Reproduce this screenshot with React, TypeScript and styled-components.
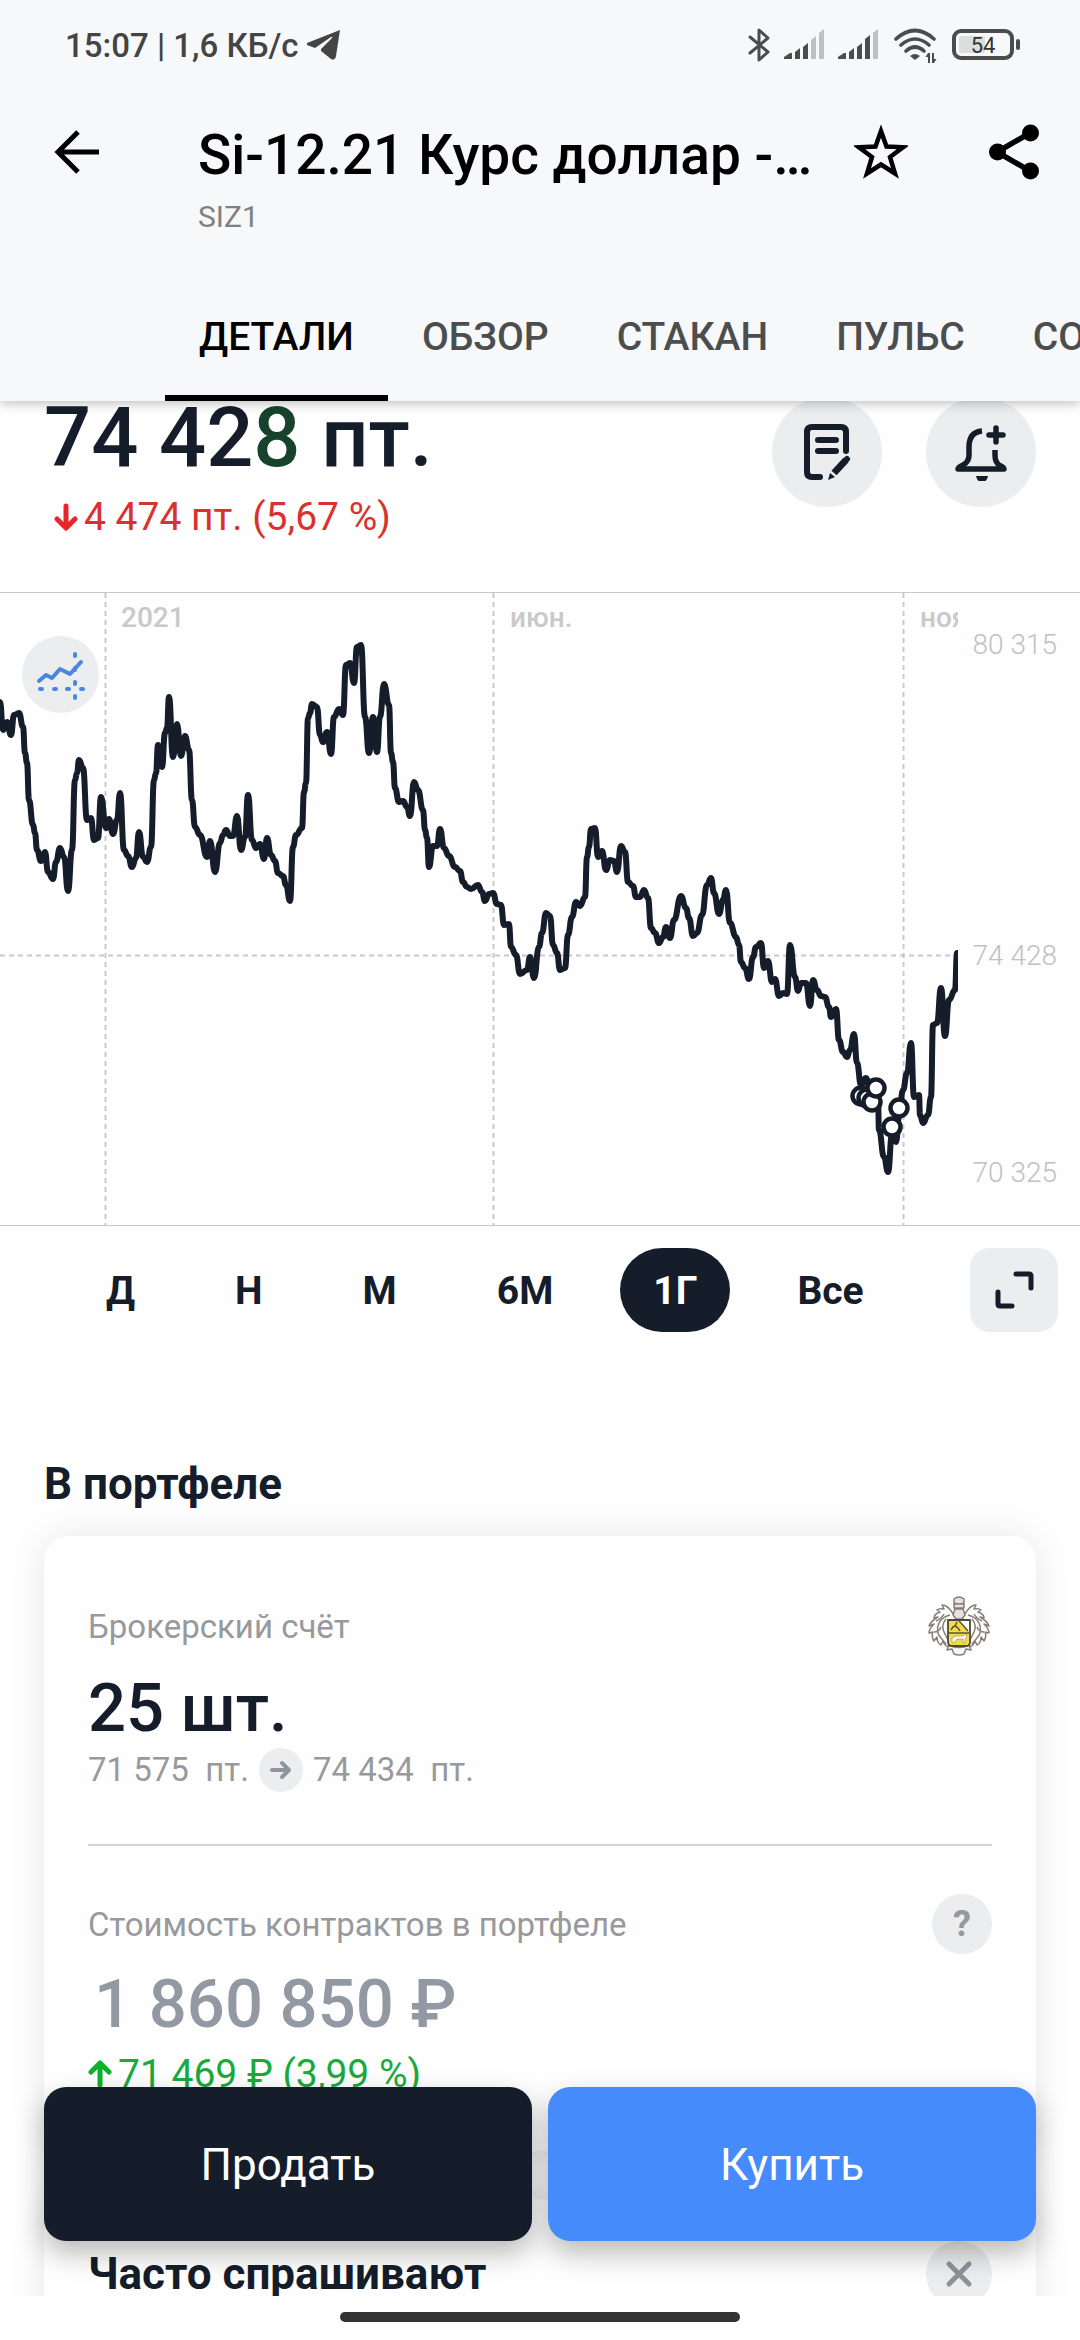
import styled, { createGlobalStyle, css } from "styled-components";
import { useState } from "react";

type Point = [number, number];

const tabs = ["ДЕТАЛИ", "ОБЗОР", "СТАКАН", "ПУЛЬС", "СОБЫТИЯ"];
const ranges = ["Д", "Н", "М", "6М", "1Г", "Все"];

const prices: Point[] = [
  [0, 702], [3, 730], [7, 722], [11, 735], [14, 715], [19, 713], [23, 727], [25, 753],
  [27, 763], [29, 800], [33, 825], [35, 833], [37, 850], [41, 861], [45, 852], [48, 872],
  [53, 879], [56, 862], [60, 848], [64, 857], [68, 891], [72, 850], [75, 780], [77, 773],
  [79, 760], [83, 768], [87, 820], [91, 818], [94, 840], [98, 838], [101, 797], [106, 828],
  [109, 819], [113, 834], [117, 820], [120, 793], [124, 850], [128, 856], [132, 867], [136, 858],
  [139, 832], [143, 857], [147, 862], [151, 847], [154, 780], [156, 773], [158, 745], [162, 767],
  [165, 733], [167, 728], [169, 697], [173, 757], [177, 724], [181, 756], [185, 736], [189, 750],
  [192, 800], [195, 827], [200, 835], [207, 857], [210, 841], [215, 872], [220, 843], [223, 835],
  [226, 830], [230, 836], [233, 836], [237, 816], [241, 850], [245, 837], [248, 795], [252, 840],
  [256, 848], [260, 844], [264, 859], [267, 838], [271, 855], [275, 861], [278, 873], [283, 876],
  [286, 885], [290, 901], [293, 847], [296, 835], [302, 828], [304, 792], [306, 783], [308, 718],
  [310, 713], [312, 704], [317, 707], [320, 735], [323, 742], [327, 732], [331, 754], [334, 717],
  [339, 709], [343, 715], [346, 665], [350, 663], [354, 683], [357, 647], [361, 645], [365, 717],
  [369, 753], [373, 717], [377, 752], [380, 717], [384, 684], [389, 705], [391, 753], [393, 762],
  [395, 788], [399, 802], [403, 801], [407, 807], [410, 816], [414, 782], [418, 790], [423, 810],
  [425, 830], [427, 838], [429, 867], [433, 846], [437, 846], [440, 829], [444, 848], [449, 856],
  [455, 867], [460, 871], [463, 882], [467, 887], [471, 889], [478, 885], [482, 892], [485, 901],
  [489, 894], [493, 893], [497, 904], [501, 905], [504, 925], [509, 924], [511, 947], [516, 955],
  [520, 974], [527, 970], [530, 957], [534, 978], [539, 947], [542, 933], [546, 913], [550, 916],
  [553, 945], [557, 953], [560, 970], [565, 968], [568, 935], [572, 917], [576, 902], [580, 906],
  [585, 897], [587, 857], [589, 847], [591, 829], [595, 828], [598, 857], [602, 851], [606, 870],
  [610, 860], [614, 861], [617, 872], [621, 846], [625, 852], [628, 882], [633, 886], [636, 897],
  [640, 897], [644, 890], [648, 898], [651, 928], [655, 933], [659, 943], [663, 937], [666, 927],
  [670, 938], [674, 920], [681, 896], [686, 908], [689, 918], [693, 936], [697, 933], [702, 915],
  [707, 885], [711, 878], [714, 893], [719, 914], [723, 900], [726, 890], [730, 923], [736, 937],
  [739, 945], [741, 962], [745, 968], [749, 979], [753, 957], [756, 947], [761, 943], [764, 968],
  [768, 961], [772, 982], [775, 979], [779, 996], [783, 993], [787, 994], [790, 945], [795, 977],
  [798, 991], [801, 983], [806, 983], [810, 1006], [813, 980], [817, 990], [821, 996], [825, 997],
  [829, 1007], [831, 1017], [836, 1009], [839, 1040], [843, 1052], [847, 1057], [850, 1050], [854, 1034],
  [857, 1063], [861, 1085], [866, 1078], [872, 1102], [878, 1100], [879, 1130], [884, 1157], [888, 1172],
  [892, 1135], [896, 1142], [899, 1117], [903, 1090], [907, 1073], [911, 1043], [914, 1097], [919, 1095],
  [920, 1115], [923, 1123], [928, 1115], [931, 1097], [933, 1025], [937, 1023], [941, 988], [945, 1036],
  [949, 1000], [955, 990], [957, 953],
];

const deals: Point[] = [[861, 1096], [867, 1098], [872, 1102], [876, 1088], [899, 1108], [892, 1127]];

const buildLine = (points: Point[]) =>
  points
    .map(([x, y], i) => {
      if (i === 0) return `M${x} ${y}`;
      const [px, py] = points[i - 1];
      const mid = (px + x) / 2;
      return `C${mid} ${py} ${mid} ${y} ${x} ${y}`;
    })
    .join("");

const StatusIcons = () => (
  <svg width="272" height="36" viewBox="0 0 272 36" fill="none">
    <path d="M2 10l18 15-9 8V3l9 8L2 26" stroke="#4c4c4c" strokeWidth="3" strokeLinejoin="round" strokeLinecap="round" />
    <g fill="#4c4c4c">
      <path d="M36 32v-2l6-4h2v6zM47 25l5-4v11h-5zM55 20l5-4v16h-5z" />
      <path d="M63 13l5-4v23h-5zM71 6l5-4v30h-5z" opacity=".32" />
      <path d="M90 32v-2l6-4h2v6zM101 25l5-4v11h-5zM109 20l5-4v16h-5zM117 12l5-4v24h-5z" />
      <path d="M125 6l5-4v30h-5z" opacity=".32" />
      <path d="M167 33l-5-4q5-4 10 0z" />
      <path d="M180 36v-6h-2.500l2.500-4h2v10zM184 26v10h2l2.500-4H186v-6z" />
    </g>
    <path d="M148 12q19-17 38 0M153 18q14-12 28 0M158 24q9-8 18 0" stroke="#4c4c4c" strokeWidth="3.600" strokeLinecap="round" />
    <rect x="206" y="4" width="58" height="27" rx="7" stroke="#4c4c4c" strokeWidth="4" />
    <rect x="211" y="9" width="26" height="17" rx="2" fill="#dcdddf" />
    <rect x="268" y="12" width="4" height="11" rx="2" fill="#4c4c4c" />
    <text x="235" y="26" textAnchor="middle" fontSize="22" fill="#333">54</text>
  </svg>
);

const Crest = () => (
  <svg width="66" height="64" viewBox="0 0 66 64" fill="none" stroke="#857f78" strokeWidth="1.500" strokeLinejoin="round">
    <path d="M28 5q5-4 10 0v4q-5 2-10 0zM28 10h10v4H28zM29 15h8l2 6-3 4h-6l-3-4z" fill="#e6e3df" />
    <path d="M27 20q-5-9-11-9l2 4q-5-1-7 1l3 2q-6 2-6 6l4-1q-7 4-9 9l5-2q-5 5-5 9l4-1q-2 4 1 9l3-4q0 6 4 8l2-4q2 6 7 6" />
    <path d="M39 20q5-9 11-9l-2 4q5-1 7 1l-3 2q6 2 6 6l-4-1q7 4 9 9l-5-2q5 5 5 9l-4-1q2 4-1 9l-3-4q0 6-4 8l-2-4q-2 6-7 6" />
    <path d="M24 21q-8 2-11 8-4 9 2 15l5 6M42 21q8 2 11 8 4 9-2 15l-5 6M20 25q-6 7-1 15l3 6M46 25q6 7 1 15l-3 6M10 27q6-3 8-7M56 27q-6-3-8-7M8 38q5 0 7-5M58 38q-5 0-7-5" />
    <path d="M23 51q10 5 20 0l2 5-5-1-2 5q-5 2-10 0l-2-5-5 1z" fill="#f6f5f3" />
    <path d="M22 26h22v22q0 4-4 4H26q-4 0-4-4z" fill="#f3dc45" stroke="#4c4739" strokeWidth="1.800" />
    <path d="M34 27h9v11z" fill="#fff" stroke="none" />
    <path d="M22 39h22M33 27q4 4 9 10M25 36q2-4 4-4 3 1 5 5M29 32l2-4" stroke="#5b543f" />
    <path d="M26 48v-4l4-2h7l3-2 1 3-2 2v4h-2v-4h-6l-3 4z" fill="#fff" stroke="#a89440" strokeWidth=".700" />
  </svg>
);

const App = () => {
  const [activeTab, setActiveTab] = useState("ДЕТАЛИ");
  const [activeRange, setActiveRange] = useState("1Г");

  return (
    <Screen>
      <GlobalStyle />
      <Header>
        <StatusBar>
          <StatusText>
            15:07 | 1,6 КБ/с
            <svg width="34" height="30" viewBox="0 0 34 30">
              <path d="M33 0L0 13q-1 1 0 2l8 3 16-11q2-1 1 1L14 19v2l10 8q4 2 5-3z" fill="#444" />
            </svg>
          </StatusText>
          <StatusIcons />
        </StatusBar>
        <Toolbar>
          <IconButton aria-label="Назад">
            <svg width="46" height="46" viewBox="0 0 46 46" fill="none" stroke="#000" strokeWidth="5">
              <path d="M24 3L4 23l20 20M4 23h41" />
            </svg>
          </IconButton>
          <TitleBlock>
            <Title>Si-12.21 Курс доллар -…</Title>
            <Ticker>SIZ1</Ticker>
          </TitleBlock>
          <ToolbarActions>
            <IconButton aria-label="В избранное">
              <svg width="54" height="54" viewBox="0 0 54 54" fill="none" stroke="#000" strokeWidth="4.500">
                <path d="M27 6l5.500 15.500 16.500.800L36 32l5 16.500L27 39.500l-14 9L18 32 5 22.300l16.500-.8z" />
              </svg>
            </IconButton>
            <IconButton aria-label="Поделиться">
              <svg width="52" height="56" viewBox="0 0 52 56">
                <path d="M42 9L9 28l33 19" fill="none" stroke="#000" strokeWidth="5.500" />
                <circle cx="42.500" cy="9" r="8.500" />
                <circle cx="9.500" cy="28" r="8.500" />
                <circle cx="42.500" cy="47" r="8.500" />
              </svg>
            </IconButton>
          </ToolbarActions>
        </Toolbar>
        <Tabs>
          {tabs.map((tab) => (
            <Tab key={tab} $active={tab === activeTab} onClick={() => setActiveTab(tab)}>
              {tab}
            </Tab>
          ))}
        </Tabs>
      </Header>

      <Main>
        <Quote>
          <div>
            <Price>
              74 42<PriceTick>8</PriceTick> пт.
            </Price>
            <Change $color="#d8322f" $indent={10}>
              <svg width="24" height="28" viewBox="0 0 24 28" fill="none" stroke="#e8262a" strokeWidth="5" strokeLinecap="round" strokeLinejoin="round">
                <path d="M12 3v21M3 16l9 9 9-9" />
              </svg>
              4 474 пт. (5,67 %)
            </Change>
          </div>
          <QuoteActions>
            <RoundButton $size={110} aria-label="Заметка">
              <svg width="48" height="58" viewBox="0 0 48 58" fill="none" stroke="#151d2b" strokeWidth="6" strokeLinecap="round" strokeLinejoin="round">
                <path d="M17 54H9q-5 0-5-5V9q0-5 5-5h29q5 0 5 5v19M15 17h18M15 28h18" />
                <path d="M31 50l12-13" strokeWidth="7" strokeLinecap="butt" />
                <path d="M41 39l3-3" />
                <path d="M25 57l2-7 5 4z" fill="#151d2b" stroke="none" />
              </svg>
            </RoundButton>
            <RoundButton $size={110} aria-label="Уведомления">
              <svg width="52" height="58" viewBox="0 0 52 58" fill="none" stroke="#151d2b" strokeWidth="5.500" strokeLinejoin="round">
                <path d="M27 8C16 9 14 17 14 24v8q0 7-6 10-5 2-5 4h46q0-2-5-4-4-3-4-10v-5" />
                <path d="M41 5v14M34 12h14" strokeLinecap="round" />
                <path d="M21 53h12q-1 6-6 6t-6-6z" fill="#151d2b" stroke="none" />
              </svg>
            </RoundButton>
          </QuoteActions>
        </Quote>

        <ChartArea>
          <svg viewBox="0 592 1080 634" role="img" aria-label="График цены">
            <clipPath id="plot">
              <rect x="0" y="592" width="958" height="634" />
            </clipPath>
            <g stroke="#c8c9ca">
              <path d="M0 592.500h1080M0 1225.500h1080" />
              <path d="M105.500 593v632M493.500 593v632M903.500 593v632M0 955.500h957" strokeWidth="2" strokeDasharray="5 4" />
            </g>
            <g fill="#c8c9ca" fontSize="28" fontWeight="500" clipPath="url(#plot)">
              <text x="121" y="627">2021</text>
              <text x="510" y="627">июн.</text>
              <text x="920" y="627">нояб.</text>
            </g>
            <g fill="#c0c1c3" fontSize="28" fontWeight="300" textAnchor="end">
              <text x="1057" y="654">80 315</text>
              <text x="1057" y="965">74 428</text>
              <text x="1057" y="1182">70 325</text>
            </g>
            <g fill="none" stroke="#151d2b" strokeWidth="6" clipPath="url(#plot)">
              <path d={buildLine(prices)} strokeLinecap="round" strokeLinejoin="round" />
              {deals.map(([x, y]) => (
                <circle key={x} cx={x} cy={y} r="8.500" fill="#fff" strokeWidth="4.500" />
              ))}
            </g>
          </svg>
          <IndicatorButton $size={77} aria-label="Индикаторы">
            <svg width="50" height="50" viewBox="0 0 50 50" fill="none" stroke="#4a86dc" strokeWidth="4" strokeLinecap="round" strokeLinejoin="round">
              <path d="M3 31l7-6 6 3 8-9 10 5 11-12" />
              <path d="M39 4v2M39 18v2M39 32v2M39 46v2M4 39h2M18 39h2M31 39h2M45 39h2" />
            </svg>
          </IndicatorButton>
        </ChartArea>

        <Ranges>
          <RangeList>
            {ranges.map((range) => (
              <RangeButton key={range} $active={range === activeRange} onClick={() => setActiveRange(range)}>
                {range}
              </RangeButton>
            ))}
          </RangeList>
          <ExpandButton aria-label="Развернуть">
            <svg width="40" height="40" viewBox="0 0 40 40" fill="none" stroke="#151d2b" strokeWidth="5" strokeLinecap="round" strokeLinejoin="round">
              <path d="M22 4h13q2 0 2 2v12M4 22v12q0 2 2 2h12" />
            </svg>
          </ExpandButton>
        </Ranges>

        <SectionTitle>В портфеле</SectionTitle>
        <Card>
          <CardTop>
            <CardRow $height={64}>
              <Label>Брокерский счёт</Label>
              <Crest />
            </CardRow>
            <Amount>25 шт.</Amount>
            <PriceMove>
              71 575&nbsp; пт.
              <ArrowBadge>
                <svg width="24" height="22" viewBox="0 0 24 22" fill="none" stroke="#8e959f" strokeWidth="4" strokeLinecap="round" strokeLinejoin="round">
                  <path d="M3 11h17M13 4l7 7-7 7" />
                </svg>
              </ArrowBadge>
              74 434&nbsp; пт.
            </PriceMove>
          </CardTop>
          <CardBottom>
            <CardRow $height={60}>
              <Label>Стоимость контрактов в портфеле</Label>
              <RoundButton $size={60} aria-label="Справка">?</RoundButton>
            </CardRow>
            <Amount $muted>1 860 850 ₽</Amount>
            <Change $color="#1aa93c" $indent={0}>
              <svg width="24" height="28" viewBox="0 0 24 28" fill="none" stroke="#0db02b" strokeWidth="5" strokeLinecap="round" strokeLinejoin="round">
                <path d="M12 25V4M3 12l9-9 9 9" />
              </svg>
              71 469 ₽ (3,99 %)
            </Change>
          </CardBottom>
        </Card>
        <FaqCard>
          <FaqTitle>Часто спрашивают</FaqTitle>
          <RoundButton $size={66} aria-label="Закрыть">
            <svg width="30" height="30" viewBox="0 0 30 30" fill="none" stroke="#8e9299" strokeWidth="5" strokeLinecap="round">
              <path d="M5 5l20 20M25 5L5 25" />
            </svg>
          </RoundButton>
        </FaqCard>

        <TradeBar>
          <TradeButton $color="#151d2b">Продать</TradeButton>
          <TradeButton $color="#458bfb">Купить</TradeButton>
        </TradeBar>
      </Main>

      <HomeBar>
        <HomeHandle />
      </HomeBar>
    </Screen>
  );
};
export default App;

const GlobalStyle = createGlobalStyle`
  * {
    box-sizing: border-box;
  }
  body {
    margin: 0;
    background: #fefefe;
    color: #151d2b;
    font-family: Roboto, "Liberation Sans", sans-serif;
  }
  button {
    border: 0;
    padding: 0;
    background: none;
    color: inherit;
    font: inherit;
    cursor: pointer;
  }
  svg {
    display: block;
    flex: none;
  }
`;
const Screen = styled.div`
  display: flex;
  flex-direction: column;
  height: 100vh;
`;
const Header = styled.header`
  position: relative;
  z-index: 2;
  background: #f7f8fa;
  box-shadow: 0 1px 12px rgba(0, 0, 0, 0.3);
`;
const StatusBar = styled.div`
  display: flex;
  align-items: center;
  justify-content: space-between;
  height: 90px;
  padding: 0 60px 0 65px;
`;
const StatusText = styled.div`
  display: flex;
  align-items: center;
  gap: 8px;
  color: #444;
  font-size: 33px;
  font-weight: 500;
`;
const Toolbar = styled.div`
  display: flex;
  align-items: flex-start;
  padding: 33px 40px 0 54px;
`;
const IconButton = styled.button`
  display: flex;
  align-items: center;
  height: 58px;
`;
const TitleBlock = styled.div`
  flex: 1;
  min-width: 0;
  margin-left: 98px;
`;
const Title = styled.h1`
  margin: 0;
  color: #000;
  font-size: 55px;
  font-weight: 500;
  line-height: 64px;
  white-space: nowrap;
`;
const Ticker = styled.div`
  margin-top: 10px;
  color: #808080;
  font-size: 30px;
  line-height: 40px;
`;
const ToolbarActions = styled.div`
  display: flex;
  gap: 80px;
`;
const Tabs = styled.nav`
  display: flex;
  margin: 34px 0 0 165px;
  overflow: hidden;
`;
const Tab = styled.button<{ $active: boolean }>`
  flex: none;
  height: 130px;
  padding: 8px 34px 0;
  border-bottom: 6px solid transparent;
  color: #4c4d4e;
  font-size: 39px;
  font-weight: 500;
  ${({ $active }) =>
    $active &&
    css`
      border-color: #000;
      color: #000;
    `}
`;
const Main = styled.main`
  position: relative;
  flex: 1;
  min-height: 0;
  overflow: hidden;
`;
const Quote = styled.section`
  display: flex;
  justify-content: space-between;
  margin-top: -12px;
  padding: 0 44px 45px;
`;
const Price = styled.div`
  font-size: 83px;
  font-weight: 500;
  line-height: 98px;
`;
const PriceTick = styled.span`
  color: #17432c;
`;
const Change = styled.div<{ $color: string; $indent: number }>`
  display: flex;
  align-items: center;
  gap: 6px;
  padding-left: ${({ $indent }) => $indent}px;
  color: ${({ $color }) => $color};
  font-size: 39px;
  line-height: 60px;
`;
const QuoteActions = styled.div`
  display: flex;
  gap: 44px;
  padding-top: 8px;
`;
const RoundButton = styled.button<{ $size: number }>`
  display: flex;
  align-items: center;
  justify-content: center;
  flex: none;
  width: ${({ $size }) => $size}px;
  height: ${({ $size }) => $size}px;
  border-radius: 50%;
  background: #ebedee;
  color: #9299a2;
  font-size: 36px;
  font-weight: 700;
`;
const ChartArea = styled.section`
  position: relative;
  > svg {
    width: 100%;
  }
`;
const IndicatorButton = styled(RoundButton)`
  position: absolute;
  top: 44px;
  left: 22px;
`;
const Ranges = styled.div`
  display: flex;
  justify-content: space-between;
  padding: 22px 22px 0 73px;
`;
const RangeList = styled.div`
  display: flex;
  gap: 34px;
`;
const RangeButton = styled.button<{ $active: boolean }>`
  height: 84px;
  padding: 2px 33px 0;
  border-radius: 42px;
  background: ${({ $active }) => ($active ? "#151d2b" : "transparent")};
  color: ${({ $active }) => ($active ? "#fff" : "#151d2b")};
  font-size: 39px;
  font-weight: 700;
`;
const ExpandButton = styled.button`
  display: flex;
  align-items: center;
  justify-content: center;
  width: 88px;
  height: 84px;
  border-radius: 20px;
  background: #ebedee;
`;
const SectionTitle = styled.h2`
  margin: 124px 44px 24px;
  font-size: 44px;
  font-weight: 700;
  line-height: 56px;
`;
const Card = styled.section`
  margin: 0 44px;
  padding: 0 44px;
  border-radius: 24px;
  background: #fefefe;
  box-shadow: 0 0 36px rgba(0, 0, 0, 0.09);
`;
const CardTop = styled.div`
  padding: 58px 0 52px;
  border-bottom: 2px solid #d3d4d6;
`;
const CardBottom = styled.div`
  padding: 48px 0 47px;
`;
const CardRow = styled.div<{ $height: number }>`
  display: flex;
  align-items: center;
  justify-content: space-between;
  height: ${({ $height }) => $height}px;
  margin-bottom: 10px;
`;
const Label = styled.div`
  color: #98999c;
  font-size: 33px;
`;
const Amount = styled.div<{ $muted?: boolean }>`
  padding-left: ${({ $muted }) => ($muted ? 6 : 0)}px;
  color: ${({ $muted }) => ($muted ? "#9299a2" : "#151d2b")};
  font-size: 67px;
  font-weight: 500;
  line-height: 80px;
`;
const PriceMove = styled.div`
  display: flex;
  align-items: center;
  gap: 10px;
  color: #98999c;
  font-size: 33px;
  line-height: 44px;
`;
const ArrowBadge = styled.span`
  display: flex;
  align-items: center;
  justify-content: center;
  width: 44px;
  height: 44px;
  border-radius: 50%;
  background: #ebedee;
`;
const FaqCard = styled(Card)`
  display: flex;
  align-items: center;
  justify-content: space-between;
  margin-top: 48px;
  padding: 42px 44px;
`;
const FaqTitle = styled.h2`
  margin: 0;
  font-size: 44px;
  font-weight: 700;
`;
const TradeBar = styled.div`
  position: absolute;
  right: 44px;
  bottom: 55px;
  left: 44px;
  display: flex;
  gap: 16px;
`;
const TradeButton = styled.button<{ $color: string }>`
  flex: 1;
  height: 154px;
  padding-top: 2px;
  border-radius: 22px;
  background: ${({ $color }) => $color};
  box-shadow: 0 12px 28px rgba(0, 0, 0, 0.28);
  color: #fff;
  font-size: 44px;
`;
const HomeBar = styled.footer`
  display: flex;
  justify-content: center;
  height: 44px;
  padding-top: 16px;
  background: #fefefe;
`;
const HomeHandle = styled.div`
  width: 37%;
  height: 10px;
  border-radius: 5px;
  background: #333;
`;
